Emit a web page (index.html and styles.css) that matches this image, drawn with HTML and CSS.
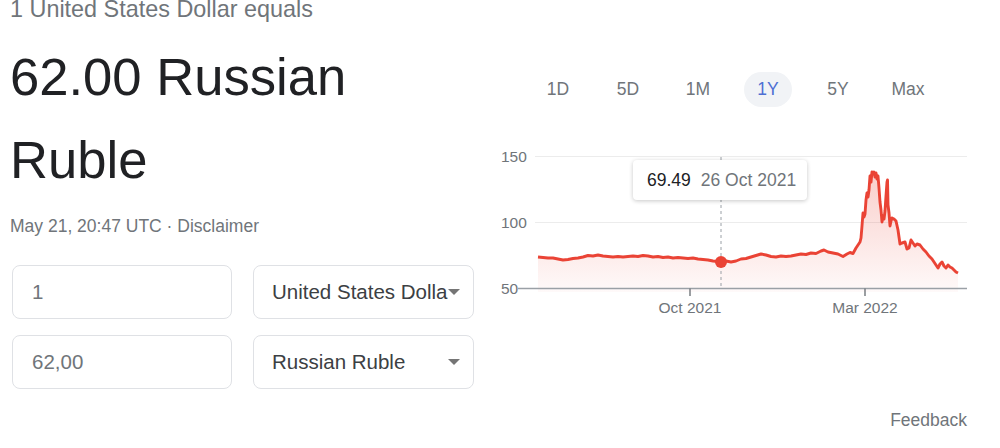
FILE: index.html
```html
<!DOCTYPE html>
<html lang="en">
<head>
  <meta charset="UTF-8">
  <meta name="viewport" content="width=device-width, initial-scale=1.0">
  <title>USD to RUB</title>
  <link rel="stylesheet" href="styles.css">
</head>
<body>
  <div class="page">

    <!-- Result + converter -->
    <div class="result">
      <div class="equals">1 United States Dollar equals</div>
      <div class="amount">62.00 Russian Ruble</div>
      <div class="stamp">May 21, 20:47 UTC · Disclaimer</div>

      <div class="converter">
        <input class="field" type="text" value="1">
        <div class="picker"><span class="picker-label">United States Dollar</span><span class="caret"></span></div>
        <input class="field" type="text" value="62,00">
        <div class="picker"><span class="picker-label">Russian Ruble</span><span class="caret"></span></div>
      </div>
    </div>

    <!-- Chart -->
    <div class="chart-panel">
      <div class="ranges">
        <span class="range">1D</span>
        <span class="range">5D</span>
        <span class="range">1M</span>
        <span class="range active">1Y</span>
        <span class="range">5Y</span>
        <span class="range">Max</span>
      </div>

      <div class="chart">
        <svg class="plot" width="490" height="185" viewBox="490 140 490 185">
          <defs>
            <linearGradient id="area" x1="0" y1="170" x2="0" y2="292" gradientUnits="userSpaceOnUse">
              <stop offset="0" stop-color="#ea4335" stop-opacity="0.26"/>
              <stop offset="1" stop-color="#ea4335" stop-opacity="0.03"/>
            </linearGradient>
          </defs>

          <line class="grid" x1="535" y1="156.5" x2="967" y2="156.5"/>
          <line class="grid" x1="535" y1="222.5" x2="967" y2="222.5"/>

          <text class="axis-label" x="501" y="161.7">150</text>
          <text class="axis-label" x="501" y="228.3">100</text>
          <text class="axis-label" x="501" y="294.3">50</text>

          <path class="area" d="M538,257 L543,257.5 548,258 553,258 558,259 563,260 568,259.5 573,258.5 578,258 583,257 588,255.5 593,256 598,255 603,256 608,256.5 613,257 618,256.5 623,257 628,256.5 633,256 638,256.5 643,255.5 648,256 653,257 658,256.5 663,257.5 668,257 673,258 678,257.5 683,258 688,258.5 693,258 698,259 703,259.5 708,260 713,261 718,261.5 721,262 726,261 731,262 736,261 741,259 746,258.5 751,257 756,255.5 761,254 766,255 771,256.5 776,257 781,256 786,256.5 791,256 796,255 801,254 806,254.5 811,253 816,253.5 821,251 824,250 828,252 833,253 838,254 843,256.5 847,254 850,252.5 853,253.5 856,248 858,245 860,242 861,238 862,226 863,213 864,217 865,214 866,200 867,193 868,197 869,190 870,176 871,182 872,172 873,174 874,172 875,177 876,173 877,179 878,176 879,188 880,202 881,210 882,222 883,216 884,219 885,211 886,196 887,182 887.5,180 888,205 889,213 890,226 891,221 892,218 894,219 896,221 898,230 900,244 902,243 905,242 907,249 909,248 911,240 913,243 915,246 917,244 920,245 923,249 926,252 929,256 932,259 934,262 936,265 938,268 940,264 942,262 944,266 946,268 948,265 950,267 952,268 954,270 956,272 958,273 L958,292 L538,292 Z"/>

          <line class="axis" x1="518" y1="288.5" x2="967" y2="288.5"/>
          <line class="tick" x1="690" y1="288.5" x2="690" y2="296"/>
          <line class="tick" x1="865" y1="288.5" x2="865" y2="296"/>
          <text class="axis-label" x="690" y="312.5" text-anchor="middle">Oct 2021</text>
          <text class="axis-label" x="865" y="312.5" text-anchor="middle">Mar 2022</text>

          <line class="cursor" x1="721" y1="157" x2="721" y2="288"/>

          <path class="series" d="M538,257 L543,257.5 548,258 553,258 558,259 563,260 568,259.5 573,258.5 578,258 583,257 588,255.5 593,256 598,255 603,256 608,256.5 613,257 618,256.5 623,257 628,256.5 633,256 638,256.5 643,255.5 648,256 653,257 658,256.5 663,257.5 668,257 673,258 678,257.5 683,258 688,258.5 693,258 698,259 703,259.5 708,260 713,261 718,261.5 721,262 726,261 731,262 736,261 741,259 746,258.5 751,257 756,255.5 761,254 766,255 771,256.5 776,257 781,256 786,256.5 791,256 796,255 801,254 806,254.5 811,253 816,253.5 821,251 824,250 828,252 833,253 838,254 843,256.5 847,254 850,252.5 853,253.5 856,248 858,245 860,242 861,238 862,226 863,213 864,217 865,214 866,200 867,193 868,197 869,190 870,176 871,182 872,172 873,174 874,172 875,177 876,173 877,179 878,176 879,188 880,202 881,210 882,222 883,216 884,219 885,211 886,196 887,182 887.5,180 888,205 889,213 890,226 891,221 892,218 894,219 896,221 898,230 900,244 902,243 905,242 907,249 909,248 911,240 913,243 915,246 917,244 920,245 923,249 926,252 929,256 932,259 934,262 936,265 938,268 940,264 942,262 944,266 946,268 948,265 950,267 952,268 954,270 956,272 958,273"/>

          <circle class="marker" cx="721" cy="262" r="6"/>
        </svg>

        <div class="tooltip">
          <span class="tip-value">69.49</span>
          <span class="tip-date">26 Oct 2021</span>
        </div>
      </div>

      <div class="feedback">Feedback</div>
    </div>

  </div>
</body>
</html>
```

FILE: styles.css
```css
/* ===== Currency card ===== */
:root {
  --text-dark: #202124;
  --text-muted: #70757a;
  --line-red: #ea4335;
  --border: #dfe1e5;
  --font-family: 'Liberation Sans', Arial, sans-serif;
}

body {
  margin: 0;
  font-family: var(--font-family);
  background: #fff;
  color: var(--text-dark);
  overflow: hidden;
}

.page {
  display: grid;
  grid-template-columns: 490px 1fr;
  width: 1000px;
  height: 448px;
}

/* left side */
.result {
  padding-left: 10px;
}

.equals {
  margin-top: -4px;
  font-size: 23.4px;
  line-height: 26px;
  color: var(--text-muted);
}

.amount {
  margin-top: 13px;
  width: 440px;
  font-size: 52.6px;
  line-height: 83px;
  color: var(--text-dark);
}

.stamp {
  margin-top: 14px;
  font-size: 17.5px;
  line-height: 22px;
  color: var(--text-muted);
}

.converter {
  display: grid;
  grid-template-columns: 220px 221px;
  grid-auto-rows: 54px;
  column-gap: 21px;
  row-gap: 16px;
  margin: 28px 0 0 2px;
}

.field, .picker {
  box-sizing: border-box;
  height: 54px;
  border: 1px solid var(--border);
  border-radius: 8px;
  font-family: var(--font-family);
  font-size: 20.5px;
}

.field {
  width: 100%;
  padding: 0 0 0 19px;
  color: var(--text-muted);
  background: #fff;
  outline: none;
}

.picker {
  display: flex;
  align-items: center;
  padding: 0 13px 0 18px;
  color: #3c4043;
}

.picker-label {
  flex: 1;
  white-space: nowrap;
  overflow: hidden;
}

.caret {
  width: 0;
  height: 0;
  border-left: 6.5px solid transparent;
  border-right: 6.5px solid transparent;
  border-top: 6px solid #757575;
  flex-shrink: 0;
}

/* right side */
.chart-panel {
  display: flex;
  flex-direction: column;
}

.ranges {
  display: flex;
  margin: 72px 0 0 33px;
}

.range {
  width: 70px;
  height: 35px;
  display: flex;
  align-items: center;
  justify-content: center;
  font-size: 17.5px;
  color: var(--text-muted);
}

.range.active {
  color: #4e6fd3;
  position: relative;
}

.range.active::before {
  content: "";
  position: absolute;
  left: 11px;
  right: 11px;
  top: 0;
  bottom: 0;
  border-radius: 18px;
  background: #f1f3f6;
  z-index: -1;
}

.chart {
  position: relative;
  margin-top: 33px;
  height: 185px;
}

.plot {
  display: block;
}

.grid {
  stroke: #ececec;
  stroke-width: 1;
}

.axis {
  stroke: #9aa0a6;
  stroke-width: 1.4;
}

.tick {
  stroke: #70757a;
  stroke-width: 1.4;
}

.axis-label {
  font-family: var(--font-family);
  font-size: 15.5px;
  fill: var(--text-muted);
}

.area {
  fill: url(#area);
}

.series {
  fill: none;
  stroke: var(--line-red);
  stroke-width: 2.9;
  stroke-linejoin: round;
}

.cursor {
  stroke: #9aa0a6;
  stroke-width: 1;
  stroke-dasharray: 3 3;
}

.marker {
  fill: var(--line-red);
}

.tooltip {
  position: absolute;
  left: 143px;
  top: 20px;
  width: 174px;
  height: 40px;
  box-sizing: border-box;
  display: flex;
  align-items: center;
  gap: 10px;
  padding: 0 14px;
  background: #fff;
  border-radius: 4px;
  box-shadow: 0 1px 4px rgba(0,0,0,0.22);
  font-size: 17.5px;
  white-space: nowrap;
}

.tip-value {
  color: var(--text-dark);
}

.tip-date {
  color: var(--text-muted);
}

.feedback {
  margin-top: 84px;
  padding-right: 33px;
  text-align: right;
  font-size: 17.5px;
  line-height: 22px;
  color: var(--text-muted);
}
```
